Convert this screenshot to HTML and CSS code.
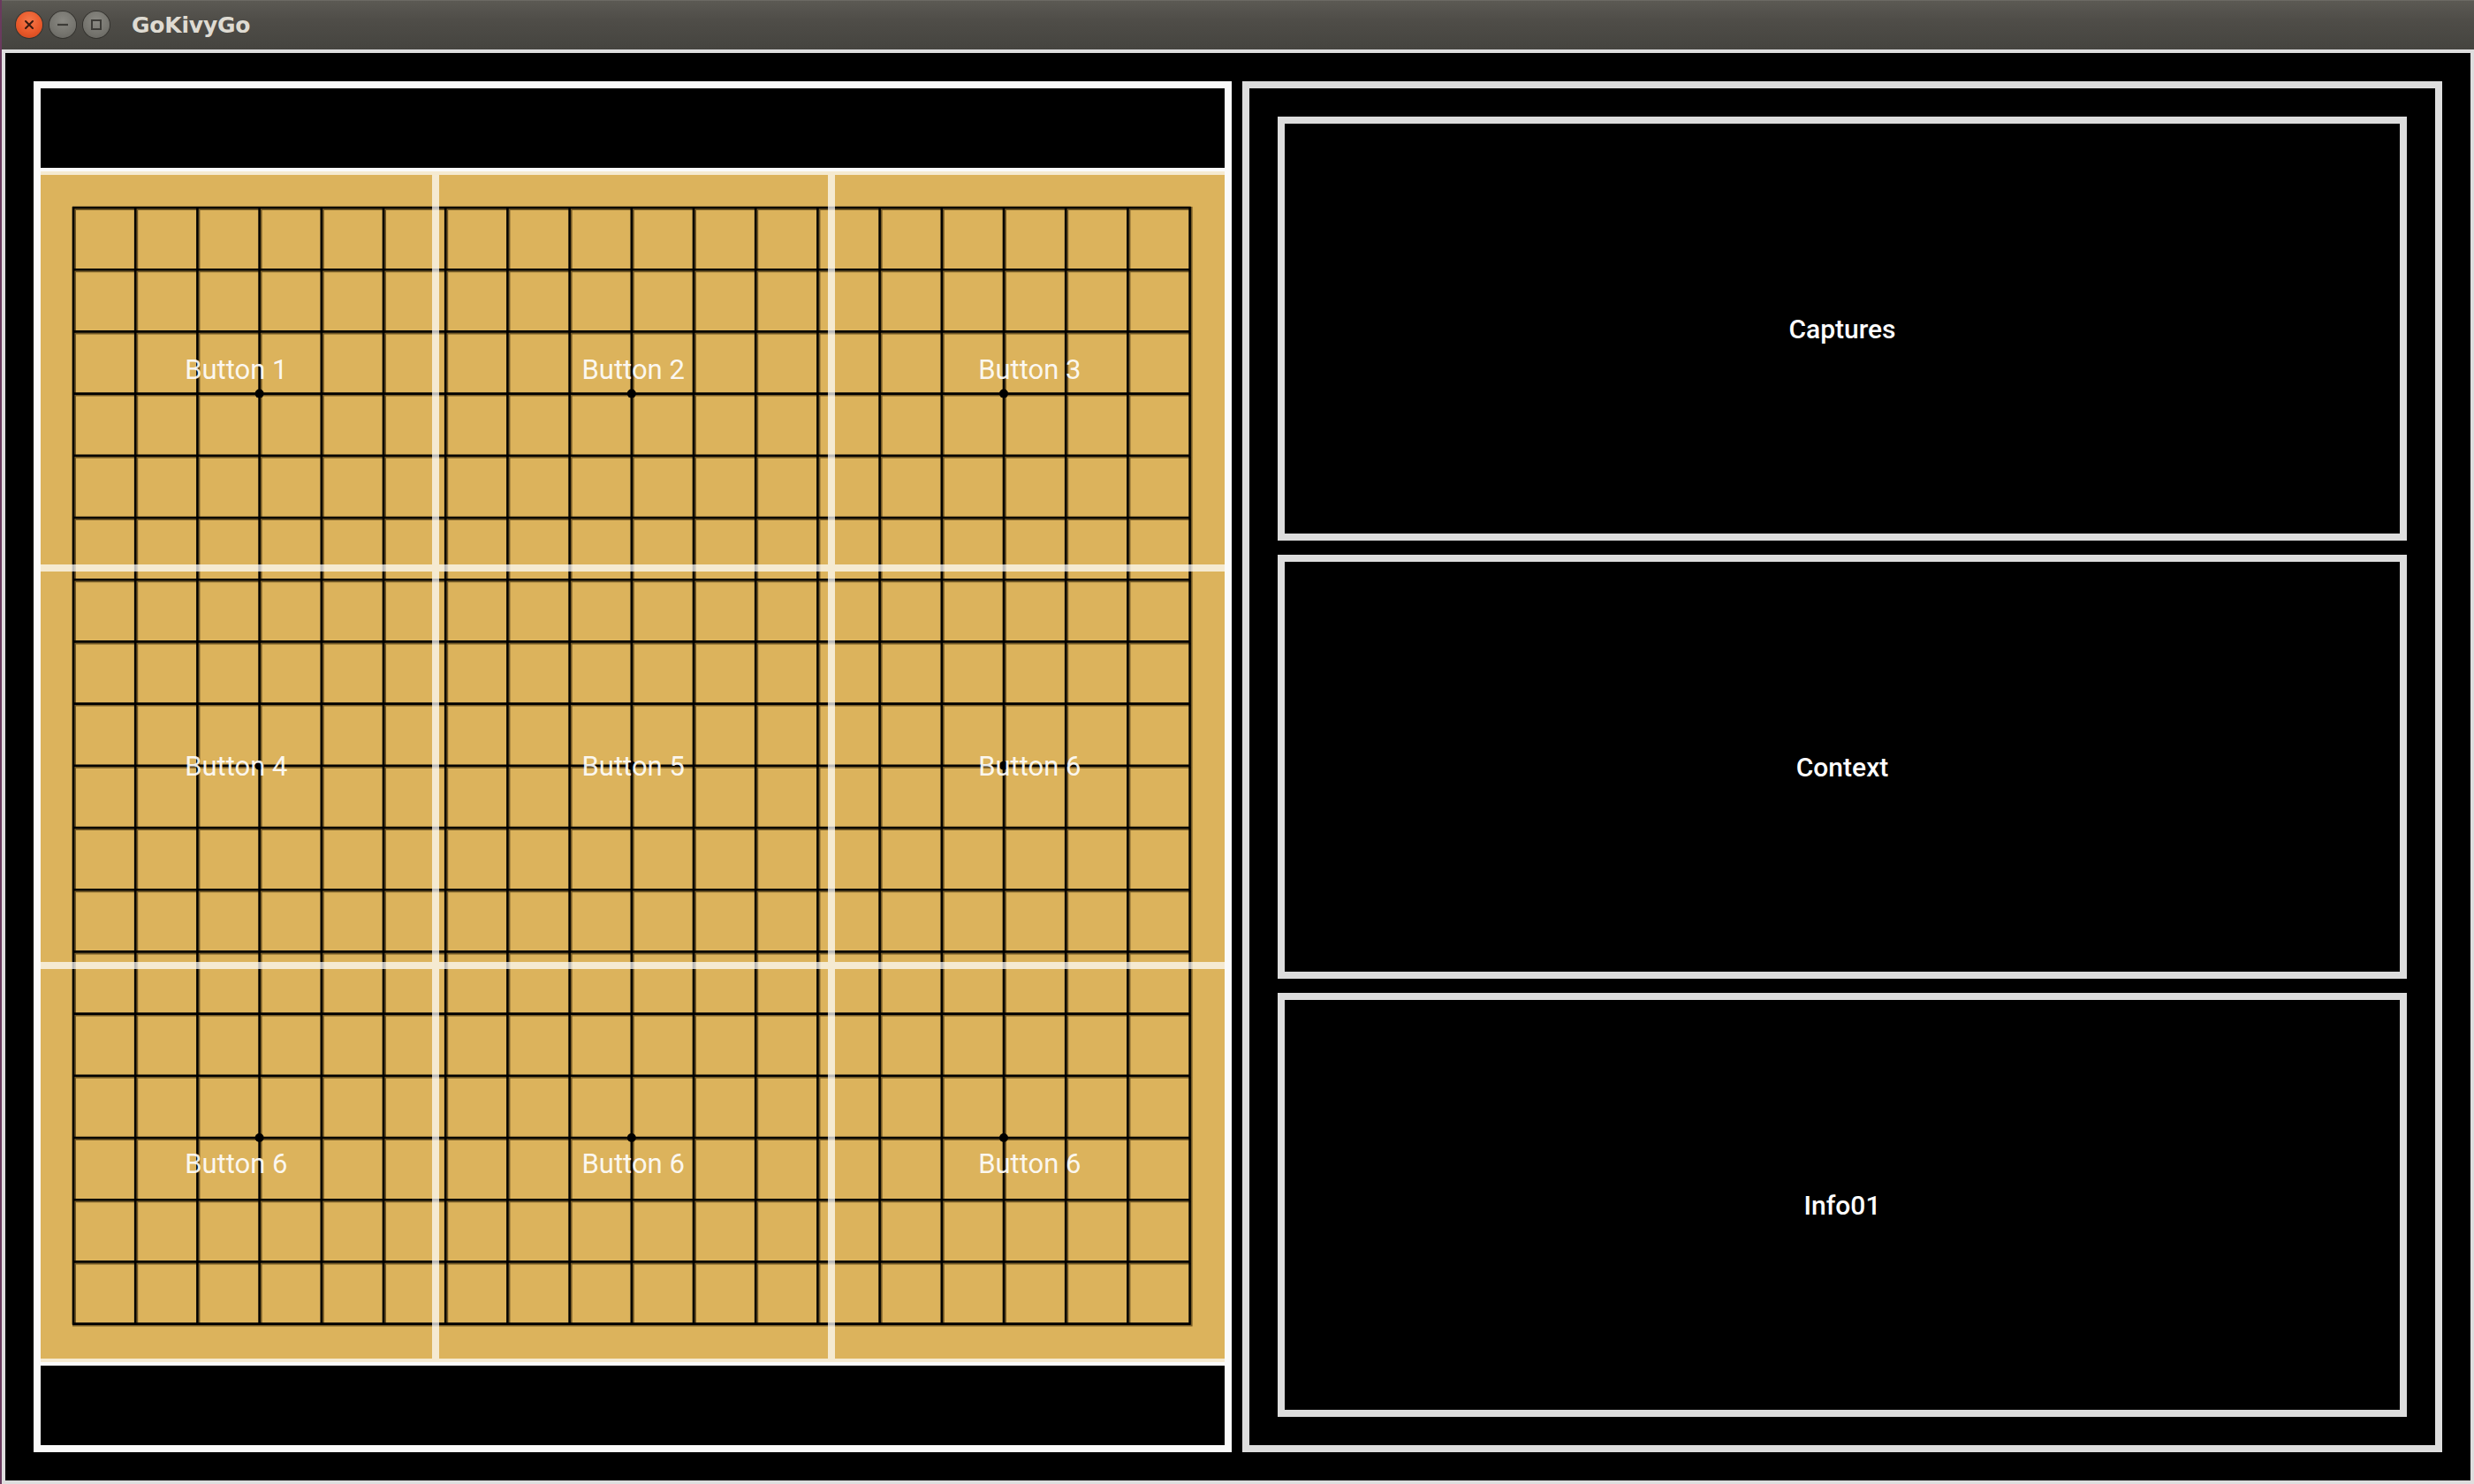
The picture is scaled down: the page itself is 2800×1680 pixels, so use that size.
FILE: index.html
```html
<!DOCTYPE html>
<html>
<head>
<meta charset="utf-8">
<title>GoKivyGo</title>
<link rel="stylesheet" href="styles.css">
</head>
<body>
<div class="desktop">
  <div class="window">
    <div class="titlebar">
      <div class="controls">
        <span class="wbtn close"><svg width="30" height="30" viewBox="0 0 30 30"><path d="M11 11L19 19M19 11L11 19" stroke="#3a1a10" stroke-width="2" stroke-linecap="round"/></svg></span>
        <span class="wbtn mini"><svg width="30" height="30" viewBox="0 0 30 30"><path d="M9 15H21" stroke="#3c3b37" stroke-width="2.2"/></svg></span>
        <span class="wbtn maxi"><svg width="30" height="30" viewBox="0 0 30 30"><rect x="10" y="10" width="10" height="10" fill="none" stroke="#3c3b37" stroke-width="2"/></svg></span>
      </div>
      <div class="title">GoKivyGo</div>
    </div>
    <div class="client">
      <div class="left-panel">
        <div class="bar bar-top"></div>
        <div class="board">
          <svg class="goban" width="1340" height="1348" viewBox="0 0 1340 1348">
            <path class="shadow" d="M39 40V1307.6M109.2 40V1307.6M179.4 40V1307.6M249.6 40V1307.6M319.8 40V1307.6M390 40V1307.6M460.2 40V1307.6M530.4 40V1307.6M600.6 40V1307.6M670.8 40V1307.6M741 40V1307.6M811.2 40V1307.6M881.4 40V1307.6M951.6 40V1307.6M1021.8 40V1307.6M1092 40V1307.6M1162.2 40V1307.6M1232.4 40V1307.6M1302.6 40V1307.6M36 43H1303.6M36 113.2H1303.6M36 183.4H1303.6M36 253.6H1303.6M36 323.8H1303.6M36 394H1303.6M36 464.2H1303.6M36 534.4H1303.6M36 604.6H1303.6M36 674.8H1303.6M36 745H1303.6M36 815.2H1303.6M36 885.4H1303.6M36 955.6H1303.6M36 1025.8H1303.6M36 1096H1303.6M36 1166.2H1303.6M36 1236.4H1303.6M36 1306.6H1303.6"/>
            <path class="line" d="M37 40V1305.6M107.2 40V1305.6M177.4 40V1305.6M247.6 40V1305.6M317.8 40V1305.6M388 40V1305.6M458.2 40V1305.6M528.4 40V1305.6M598.6 40V1305.6M668.8 40V1305.6M739 40V1305.6M809.2 40V1305.6M879.4 40V1305.6M949.6 40V1305.6M1019.8 40V1305.6M1090 40V1305.6M1160.2 40V1305.6M1230.4 40V1305.6M1300.6 40V1305.6M36 41H1301.6M36 111.2H1301.6M36 181.4H1301.6M36 251.6H1301.6M36 321.8H1301.6M36 392H1301.6M36 462.2H1301.6M36 532.4H1301.6M36 602.6H1301.6M36 672.8H1301.6M36 743H1301.6M36 813.2H1301.6M36 883.4H1301.6M36 953.6H1301.6M36 1023.8H1301.6M36 1094H1301.6M36 1164.2H1301.6M36 1234.4H1301.6M36 1304.6H1301.6"/>
            <g class="hoshi">
              <circle cx="247.6" cy="251.6" r="5"/><circle cx="668.8" cy="251.6" r="5"/><circle cx="1090" cy="251.6" r="5"/>
              <circle cx="247.6" cy="672.8" r="5"/><circle cx="668.8" cy="672.8" r="5"/><circle cx="1090" cy="672.8" r="5"/>
              <circle cx="247.6" cy="1094" r="5"/><circle cx="668.8" cy="1094" r="5"/><circle cx="1090" cy="1094" r="5"/>
            </g>
          </svg>
          <div class="buttons">
            <div class="btn">Button 1</div>
            <div class="btn">Button 2</div>
            <div class="btn">Button 3</div>
            <div class="btn">Button 4</div>
            <div class="btn">Button 5</div>
            <div class="btn">Button 6</div>
            <div class="btn">Button 6</div>
            <div class="btn">Button 6</div>
            <div class="btn">Button 6</div>
          </div>
        </div>
        <div class="bar bar-bottom"></div>
      </div>
      <div class="right-panel">
        <div class="box">Captures</div>
        <div class="box">Context</div>
        <div class="box">Info01</div>
      </div>
    </div>
  </div>
</div>
</body>
</html>
```
FILE: styles.css
```css
html, body {
  margin: 0;
  padding: 0;
  width: 2800px;
  height: 1680px;
  overflow: hidden;
  background: #5c2d52;
}

.desktop {
  display: flex;
  width: 2800px;
  height: 1680px;
  padding-left: 2px;
  box-sizing: border-box;
  background: #6a3a5e;
}

.window {
  display: flex;
  flex-direction: column;
  width: 2798px;
  height: 1680px;
}

.titlebar {
  height: 56px;
  flex: none;
  display: flex;
  align-items: center;
  background: linear-gradient(#5c5a54 0%, #4f4d48 40%, #45443f 100%);
  box-shadow: inset 0 1px 0 #6c6a64;
}

.controls {
  display: flex;
  align-items: center;
  gap: 8px;
  padding-left: 16px;
  width: 129px;
  box-sizing: border-box;
}

.wbtn {
  width: 30px;
  height: 30px;
  border-radius: 50%;
  display: flex;
  box-shadow: 0 0 0 1px #34332f;
}

.wbtn svg {
  display: block;
}

.close {
  background: radial-gradient(circle at 50% 35%, #f5784a 0%, #e9592a 55%, #c9421a 100%);
}

.mini, .maxi {
  background: radial-gradient(circle at 50% 35%, #8a8983 0%, #75746e 60%, #62615c 100%);
}

.title {
  font-family: "DejaVu Sans", "Open Sans", sans-serif;
  font-weight: bold;
  font-size: 25px;
  color: #dfdbd2;
  padding-left: 18px;
  letter-spacing: -0.2px;
}

.client {
  flex: none;
  height: 1624px;
  box-sizing: border-box;
  border: 4px solid #dedede;
  background: #000;
  padding: 32px;
  display: flex;
  gap: 12px;
}

.left-panel {
  width: 1356px;
  box-sizing: border-box;
  border: 8px solid #fafafa;
  display: flex;
  flex-direction: column;
}

.bar {
  height: 90px;
  background: #000;
  flex: none;
}

.bar-top {
  border-bottom: 4px solid #fafafa;
}

.bar-bottom {
  border-top: 4px solid #fafafa;
}

.board {
  height: 1348px;
  flex: none;
  background: #dcb35c;
  display: grid;
  grid-template: 1fr / 1fr;
}

.goban {
  grid-area: 1 / 1;
  display: block;
}

.goban .line {
  stroke: #000;
  stroke-width: 2.6;
  fill: none;
}

.goban .shadow {
  stroke: rgba(45, 28, 0, 0.6);
  stroke-width: 2;
  fill: none;
}

.hoshi circle {
  fill: #000;
}

.buttons {
  grid-area: 1 / 1;
  display: grid;
  grid-template-columns: 446.7px 448px 445.3px;
  grid-template-rows: repeat(3, 1fr);
}

.btn {
  box-sizing: border-box;
  border: 4px solid rgba(255, 255, 255, 0.72);
  display: flex;
  align-items: center;
  justify-content: center;
  font-family: Roboto, "Liberation Sans", sans-serif;
  font-size: 31px;
  color: rgba(255, 255, 255, 0.92);
}

.btn:nth-child(3n+1) {
  border-left: 0;
}

.btn:nth-child(3n) {
  border-right: 0;
}

.right-panel {
  width: 1358px;
  box-sizing: border-box;
  border: 8px solid #dddddd;
  padding: 32px;
  display: flex;
  flex-direction: column;
  gap: 16px;
}

.box {
  flex: 1;
  box-sizing: border-box;
  border: 8px solid #dddddd;
  display: flex;
  align-items: center;
  justify-content: center;
  font-family: Roboto, "Liberation Sans", sans-serif;
  font-size: 30px;
  font-weight: 500;
  color: #ffffff;
}
```
